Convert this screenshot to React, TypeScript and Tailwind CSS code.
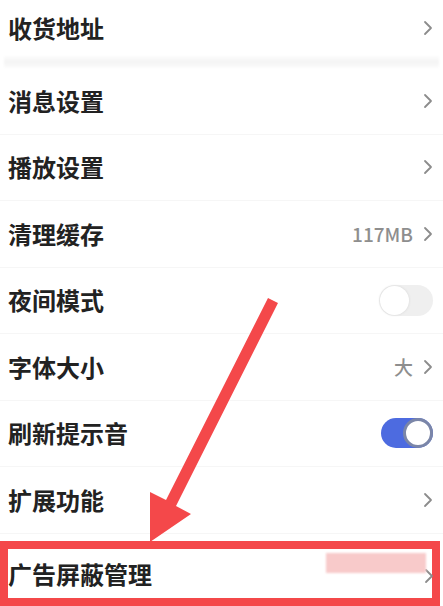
import React from "react";

type Row = {
  label: string;
  value?: string;
  toggle?: "on" | "off";
};

const rows: Row[] = [
  { label: "消息设置" },
  { label: "播放设置" },
  { label: "清理缓存", value: "117MB" },
  { label: "夜间模式", toggle: "off" },
  { label: "字体大小", value: "大" },
  { label: "刷新提示音", toggle: "on" },
  { label: "扩展功能" },
];

function Chevron() {
  return (
    <svg width="10" height="16" viewBox="0 0 10 16" className="shrink-0">
      <polyline
        points="2,2 8,8 2,14"
        fill="none"
        stroke="#8c8c8c"
        strokeWidth="1.8"
        strokeLinecap="round"
        strokeLinejoin="round"
      />
    </svg>
  );
}

function Toggle({ on }: { on: boolean }) {
  if (on) {
    return (
      <div className="w-[52px] h-[30px] rounded-full bg-[#4d6be0] flex items-center justify-end">
        <div className="w-[30px] h-[30px] rounded-full bg-white border-[3px] border-[#7b86a8]" />
      </div>
    );
  }
  return (
    <div className="w-[54px] h-[31px] rounded-full bg-[#efefef] flex items-center px-[1px]">
      <div className="w-[29px] h-[29px] rounded-full bg-white shadow-[0_0_3px_rgba(0,0,0,0.1)]" />
    </div>
  );
}

function SettingRow({ row }: { row: Row }) {
  return (
    <div className="h-[66.5px] flex items-center justify-between pl-[8px] pr-[10px] border-b border-[#f6f6f6]">
      <span className="text-[24px] font-semibold text-[#222222] leading-none">{row.label}</span>
      {row.toggle ? (
        <Toggle on={row.toggle === "on"} />
      ) : (
        <div className="flex items-center gap-[10px]">
          {row.value && (
            <span className="text-[19px] font-medium text-[#8e8e8e] leading-none">{row.value}</span>
          )}
          <Chevron />
        </div>
      )}
    </div>
  );
}

export default function App() {
  return (
    <div
      className="relative w-[443px] h-[606px] overflow-hidden bg-white"
      style={{ fontFamily: '"Noto Sans CJK SC", "Noto Sans", sans-serif' }}
    >
      <div className="h-[56px] flex items-center justify-between pl-[8px] pr-[10px]">
        <span className="text-[24px] font-semibold text-[#222222] leading-none">收货地址</span>
        <Chevron />
      </div>
      <div className="h-[12px] mx-[4px] bg-gradient-to-b from-[#fcfcfc] via-[#f4f4f4] to-[#fcfcfc] blur-[1px]" />

      {rows.map((row) => (
        <SettingRow key={row.label} row={row} />
      ))}

      <div className="h-[7.5px]" />

      <div className="relative w-[440px] h-[65px] border-[8px] border-[#f4484a] flex items-center justify-between">
        <span className="text-[24px] font-semibold text-[#222222] leading-none">广告屏蔽管理</span>
        <div className="mt-[4px] -mr-[2px]">
          <Chevron />
        </div>
        <div className="absolute left-[318px] top-[4px] w-[100px] h-[20px] bg-[#f8caca] blur-[1px]" />
      </div>

      <svg
        className="absolute inset-0 pointer-events-none"
        width="443"
        height="606"
        viewBox="0 0 443 606"
      >
        <polygon
          points="268,298 278,303 176,506 191,514 150,542 150,492 166,500"
          fill="#f4484a"
          strokeLinejoin="round"
        />
      </svg>
    </div>
  );
}
